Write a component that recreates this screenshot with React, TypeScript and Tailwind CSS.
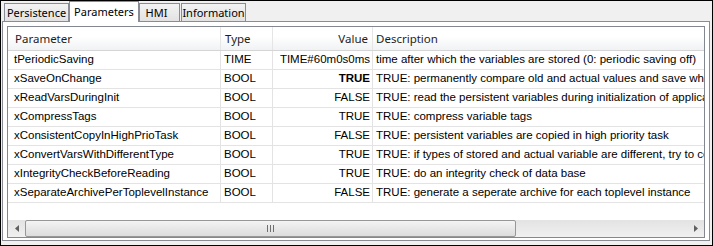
import React from 'react';

type Row = {
  name: string;
  type: string;
  value: string;
  bold?: boolean;
  desc: string;
};

const rows: Row[] = [
  { name: 'tPeriodicSaving', type: 'TIME', value: 'TIME#60m0s0ms', desc: 'time after which the variables are stored (0: periodic saving off)' },
  { name: 'xSaveOnChange', type: 'BOOL', value: 'TRUE', bold: true, desc: 'TRUE: permanently compare old and actual values and save whenever a value has changed' },
  { name: 'xReadVarsDuringInit', type: 'BOOL', value: 'FALSE', desc: 'TRUE: read the persistent variables during initialization of application' },
  { name: 'xCompressTags', type: 'BOOL', value: 'TRUE', desc: 'TRUE: compress variable tags' },
  { name: 'xConsistentCopyInHighPrioTask', type: 'BOOL', value: 'FALSE', desc: 'TRUE: persistent variables are copied in high priority task' },
  { name: 'xConvertVarsWithDifferentType', type: 'BOOL', value: 'TRUE', desc: 'TRUE: if types of stored and actual variable are different, try to convert' },
  { name: 'xIntegrityCheckBeforeReading', type: 'BOOL', value: 'TRUE', desc: 'TRUE: do an integrity check of data base' },
  { name: 'xSeparateArchivePerToplevelInstance', type: 'BOOL', value: 'FALSE', desc: 'TRUE: generate a seperate archive for each toplevel instance' },
];

const uiFont = "font-['Noto_Sans','Open_Sans',sans-serif]";
const cellFont = "font-['Liberation_Sans',Arial,sans-serif]";

function Tab({ label, width, selected, className = '' }: { label: string; width: string; selected?: boolean; className?: string }) {
  if (selected) {
    return (
      <div
        className={`relative z-10 -mb-px flex h-[21px] ${width} items-start justify-center border border-b-0 border-[#898c95] bg-white pt-[2px] text-[11px] text-black ${uiFont} ${className}`}
      >
        {label}
      </div>
    );
  }
  return (
    <div
      className={`flex h-[18px] ${width} items-center justify-center border border-b-0 border-[#898c95] bg-gradient-to-b from-[#f3f3f3] to-[#e2e2e2] pt-px text-[11px] text-black ${uiFont} ${className}`}
    >
      {label}
    </div>
  );
}

function Grip() {
  return (
    <svg width="8" height="7" viewBox="0 0 8 7">
      <path d="M0.5 0v7M3.5 0v7M6.5 0v7" stroke="#6f6f6f" strokeWidth="1" />
    </svg>
  );
}

export default function App() {
  return (
    <div className="flex h-[246px] w-[713px] flex-col border border-black bg-[#f0f0f0]">
      {/* tab strip */}
      <div className="flex h-[20px] items-end pl-[3px]">
        <Tab label="Persistence" width="w-[65px]" />
        <Tab label="Parameters" width="w-[70px]" selected />
        <Tab label="HMI" width="w-[41px]" className="pr-[6px]" />
        <Tab label="Information" width="w-[65px]" className="ml-px" />
      </div>

      {/* tab page */}
      <div className="mb-[4px] ml-px mr-[2px] flex flex-1 flex-col border border-[#898c95] bg-white px-[4px] pb-[2px] pt-[4px]">
        <div className="flex flex-1 flex-col overflow-hidden border border-[#828790] bg-white">
          {/* header */}
          <div className={`flex h-[24px] shrink-0 border-b border-[#d5d5d5] bg-gradient-to-b from-white from-40% to-[#f1f2f4] text-[11.5px] text-[#1e1e1e] ${uiFont}`}>
            <div className="flex w-[213px] shrink-0 items-center border-r border-[#e5e5e5] pl-[7px]">Parameter</div>
            <div className="flex w-[52px] shrink-0 items-center border-r border-[#e5e5e5] pl-[4px]">Type</div>
            <div className="flex w-[100px] shrink-0 items-center justify-end border-r border-[#e5e5e5] pr-[4px]">Value</div>
            <div className="flex w-[600px] shrink-0 items-center pl-[3px]">Description</div>
          </div>

          {/* rows */}
          <div className={`flex flex-col text-[11.5px] text-black ${cellFont}`}>
            {rows.map((r) => (
              <div key={r.name} className="flex h-[19px] shrink-0 border-b border-[#e3e3e3]">
                <div className="flex w-[213px] shrink-0 items-center border-r border-[#e3e3e3] pl-[6px] whitespace-nowrap">{r.name}</div>
                <div className="flex w-[52px] shrink-0 items-center border-r border-[#e3e3e3] pl-[3px]">{r.type}</div>
                <div className={`flex w-[100px] shrink-0 items-center justify-end border-r border-[#e3e3e3] pr-[2px] ${r.bold ? 'font-bold' : ''}`}>
                  {r.value}
                </div>
                <div className="flex w-[600px] shrink-0 items-center pl-[3px] whitespace-nowrap">{r.desc}</div>
              </div>
            ))}
          </div>

          <div className="flex-1" />

          {/* horizontal scrollbar */}
          <div className="flex h-[17px] shrink-0 items-stretch bg-gradient-to-b from-[#e3e3e3] to-[#f0f0f0]">
            <div className="flex w-[17px] items-center justify-center">
              <svg width="4" height="7" viewBox="0 0 4 7">
                <path d="M4 0L0 3.5L4 7Z" fill="#606060" />
              </svg>
            </div>
            <div className="flex w-[491px] items-center justify-center rounded-[2px] border border-[#979797] bg-gradient-to-b from-[#f4f4f4] to-[#dcdcdc]">
              <Grip />
            </div>
            <div className="flex-1" />
            <div className="flex w-[17px] items-center justify-center">
              <svg width="4" height="7" viewBox="0 0 4 7">
                <path d="M0 0L4 3.5L0 7Z" fill="#606060" />
              </svg>
            </div>
          </div>
        </div>
      </div>
    </div>
  );
}
